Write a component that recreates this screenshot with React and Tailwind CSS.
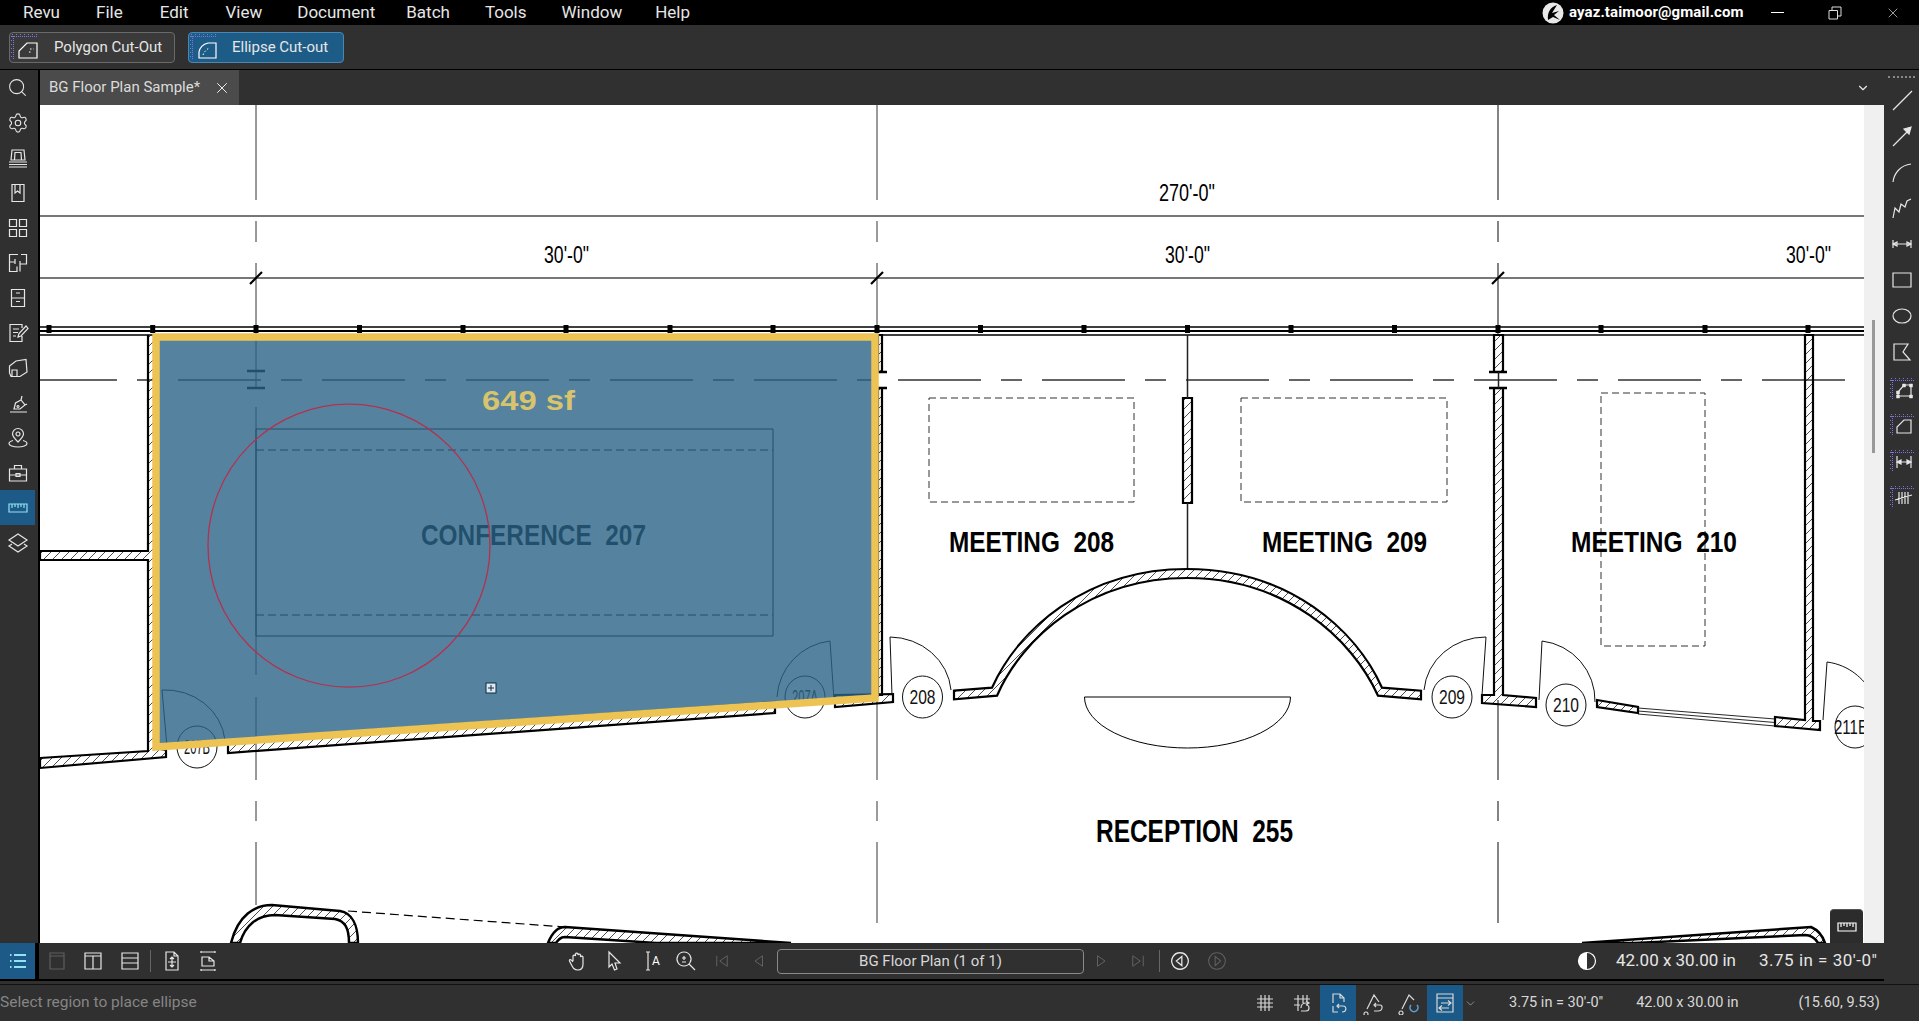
import { Search, Settings, X, ChevronDown } from 'lucide-react';

const Ic = ({ children, size = 24, className = '' }) => (
  <svg width={size} height={size} viewBox="0 0 24 24" fill="none" stroke="currentColor" strokeWidth="1.2" className={className}>
    {children}
  </svg>
);

// purple ruler ticks on the top and left of the measure tools
const Ticks = () => (
  <g stroke="#7a76e0" strokeWidth="1" strokeDasharray="1 1">
    <path d="M1 4.500H24M2.500 4V24" />
    <path d="M1 2.500H24M0.500 4V24" strokeDasharray="1 3" />
  </g>
);

const leftIcons = [
  <Search size={21} strokeWidth={1.2} />,
  <Settings size={22} strokeWidth={1.2} />,
  <Ic><path d="M5 14L6 4H18L19 14ZM8.500 14L9 6.500H15L15.500 14M3 16H21M3 18.500H21M3 21H21" /></Ic>,
  <Ic><path d="M6 3.500H18V20.500H6ZM9 3.500V12L11.500 10L14 12V3.500" /></Ic>,
  <Ic><path d="M3.500 3.500H10.500V10.500H3.500ZM13.500 3.500H20.500V10.500H13.500ZM3.500 13.500H10.500V20.500H3.500ZM13.500 13.500H20.500V20.500H13.500Z" /></Ic>,
  <Ic><path d="M12 3.500H3.500V20.500H11V15.500M3.500 11H9M9 8V13M15 3.500H20.500V13H14V10M14 13V20.500" /></Ic>,
  <Ic><path d="M5.500 3.500H18.500V20.500H5.500ZM5.500 12H18.500M10 7H14M10 15.500H14" /></Ic>,
  <Ic><path d="M16 7V3.500H4V20.500H16V15M7 8H13M7 11.500H12M7 15H10M12 16L13 12.500L20 5L22 7.500L15 15Z" /></Ic>,
  <Ic><path d="M3.500 10L10 5L20 3.500L21 16L14 20.500H5L3.500 17ZM6 20V14H11V20" /></Ic>,
  <Ic><path d="M4 21H21M8 18L9.500 12L15 9L19 14L14 18ZM15 9L16 5M19 14L21 13M12 14.500A1 1 0 1 0 12.010 14.500" /></Ic>,
  <Ic><path d="M12 16C9 13 6.500 10.500 6.500 8A5.500 5.500 0 0 1 17.500 8C17.500 10.500 15 13 12 16ZM12 6A2 2 0 1 0 12.010 6M7 14.500C4.500 15.200 3 16.200 3 17.500C3 19.500 7 21 12 21C17 21 21 19.500 21 17.500C21 16.200 19.500 15.200 17 14.500" /></Ic>,
  <Ic><path d="M3.500 8H20.500V20H3.500ZM8.500 8V4.500H15.500V8M3.500 14H20.500M10 12.500H14V15.500H10Z" /></Ic>,
];

const rightIcons = [
  <Ic><path d="M3 22L22 3" /></Ic>,
  <Ic><path d="M3 22L18 7" /><path d="M14 5L21 3L19 10Z" fill="currentColor" /></Ic>,
  <Ic><path d="M3 22C4 13 11 5 21 4" /></Ic>,
  <Ic><path d="M3 22L5 12L9 16L11 8L15 11L17 5L21 3" /></Ic>,
  <Ic><path d="M3 8V16M21 8V16M3 12H21M3 12L7 10V14ZM21 12L17 10V14Z" /></Ic>,
  <Ic><path d="M3 5H21V19H3Z" /></Ic>,
  <Ic><path d="M3 12A9 7 0 1 0 21 12A9 7 0 1 0 3 12" /></Ic>,
  <Ic><path d="M4 4H18L13 12L20 20H4Z" /></Ic>,
  <Ic><Ticks /><path d="M8 20L8 16L14 9H21V20Z" /><path d="M6.500 15H9.500V18H6.500ZM12.500 8H15.500V11H12.500ZM19.500 8H22.500V11H19.500ZM6.500 19H9.500V22H6.500ZM19.500 19H22.500V22H19.500Z" fill="currentColor" strokeWidth="0.5" /></Ic>,
  <Ic><Ticks /><path d="M7 21V15L14 8H21V21Z" /></Ic>,
  <Ic><Ticks /><path d="M7 8V20M21 8V20M7 14H21" /><path d="M7 14L11 12V16ZM21 14L17 12V16Z" fill="currentColor" /></Ic>,
  <Ic><Ticks /><path d="M9 8V20M12 8V20M15 8V20M18 8V20M5 16L22 11" /></Ic>,
];

const Ruler = ({ className = '' }) => (
  <Ic className={className}><path d="M3 8H21V16H3ZM6 8V12M9 8V11M12 8V12M15 8V11M18 8V12" /></Ic>
);

const CutIcon = ({ ellipse }) => (
  <svg width="30" height="30" viewBox="0 0 30 30" fill="none" className="text-white">
    <g stroke="#7a76e0" strokeDasharray="1 1">
      <path d="M2 4.500H28M3.500 4V28" />
      <path d="M2 2.500H28M1.500 4V28" strokeDasharray="1 3" />
    </g>
    {ellipse ? (
      <>
        <path d="M10 26V20C11 15 15 12 19 11H27V26Z" stroke="#fff" strokeWidth="1.200" />
        <path d="M14 23C15 20 17 18 20 16" stroke="#fff" strokeDasharray="1.500 2" />
      </>
    ) : (
      <>
        <path d="M9 26V19L17 11H27V26Z" stroke="#fff" strokeWidth="1.200" />
        <path d="M20 17H24M19 20H21" stroke="#fff" strokeDasharray="1.500 2" />
      </>
    )}
  </svg>
);

const Wall = ({ d }) => <path d={d} fill="url(#hatch)" stroke="#000" strokeWidth="2.200" />;

const Tag = ({ x, y, r = 21, t }) => (
  <g>
    <ellipse cx={x} cy={y} rx={r - 1} ry={r} fill="#fff" stroke="#111" strokeWidth="1" />
    <text x={x - 13} y={y + 7} fontSize="20" textLength="26" lengthAdjust="spacingAndGlyphs" fill="#111">{t}</text>
  </g>
);

const Label = ({ x, y, w, size, t, bold = true, fill = '#000' }) => (
  <text x={x} y={y} fontSize={size} fontWeight={bold ? 700 : 400} textLength={w} lengthAdjust="spacingAndGlyphs" fill={fill}>{t}</text>
);

const posts = [49, 152.7, 256, 359.500, 463, 566, 670, 773, 877, 980.500, 1084, 1187.500, 1291, 1394.500, 1498, 1601, 1705, 1808];

const Plan = () => (
  <svg viewBox="40 105 1824 838" className="block w-[1824px] h-[838px] bg-white font-['Liberation_Sans',sans-serif]">
    <defs>
      <pattern id="hatch" width="9" height="9" patternUnits="userSpaceOnUse">
        <path d="M-1 10L10 -1" stroke="#222" strokeWidth="0.8" />
      </pattern>
    </defs>

    {/* dimension lines */}
    <path d="M40 216H1864M40 278H1864" stroke="#777" strokeWidth="2" />
    <path d="M256 105V200M256 221V242M256 263V388M256 407V675M256 697V780M256 801V821M256 842V905" stroke="#333" strokeWidth="1" fill="none" />
    <path d="M877 105V200M877 221V242M877 263V335M877 700V780M877 801V821M877 842V923" stroke="#666" strokeWidth="1.300" fill="none" />
    <path d="M1498 105V200M1498 221V242M1498 263V335M1498 700V780M1498 801V821M1498 842V923" stroke="#777" strokeWidth="1.800" fill="none" />
    <path d="M250 284L262 272M871 284L883 272M1492 284L1504 272" stroke="#000" strokeWidth="2.200" />
    <Label x={1159} y={201} w={56} size={23} t={`270'-0"`} bold={false} />
    <Label x={544} y={263} w={45} size={23} t={`30'-0"`} bold={false} />
    <Label x={1165} y={263} w={45} size={23} t={`30'-0"`} bold={false} />
    <Label x={1786} y={263} w={45} size={23} t={`30'-0"`} bold={false} />

    {/* grid line */}
    <path d="M34 380H1852" stroke="#333" strokeWidth="1.300" strokeDasharray="83 20 21 20" />

    {/* curtain wall */}
    <path d="M40 327H1864M40 335H1864" stroke="#000" strokeWidth="1.300" />
    <path d="M40 331H1864" stroke="#000" strokeWidth="2" />
    {posts.map((x) => (
      <rect key={x} x={x - 2.500} y={325} width={5} height={8} fill="#000" />
    ))}

    {/* column marks */}
    <path d="M247 371H265M247 388H265" stroke="#000" strokeWidth="2.500" />
    <path d="M877 372H887M877 388H887M1489 372H1507M1489 388H1507" stroke="#000" strokeWidth="2.500" />

    {/* walls */}
    <Wall d="M148 335V551H40V560H148V751L40 758V768L166 757V750L155 748V335" />
    <Wall d="M228 740V753L775 713V702Z" />
    <Wall d="M835 695V707L893 702V694Z" />
    <Wall d="M878 335H882V372H878ZM878 388H882V695H878Z" />
    <Wall d="M1183 398H1192V503H1183Z" />
    <path d="M1187.500 335V398M1187.500 503V569" stroke="#222" strokeWidth="1.500" />
    <Wall d="M954 690.700L992 687.700C1018 630 1085 569 1187 569C1289 569 1356 630 1382 687.700L1421 690.700V699.300L1378 695.700C1352 638 1285 578 1187 578C1089 578 1022 638 997 695.700L954 699.300Z" />
    <Wall d="M1494 335H1503V372H1494ZM1494 388H1503V695L1536 698V707L1482 703V695H1494Z" />
    <path d="M1498.500 372V388" stroke="#222" strokeWidth="1.500" />
    <Wall d="M1597 700L1638 707V713L1597 707Z" />
    <path d="M1638 708L1775 719M1638 711L1775 722.500M1638 714L1775 726" stroke="#111" strokeWidth="0.900" />
    <Wall d="M1805 335H1813V721L1820 721V730L1775 726V717L1805 720Z" />

    {/* furniture */}
    <g fill="none" stroke="#333" strokeWidth="1" strokeDasharray="7 4">
      <path d="M929 398H1134V502H929Z" />
      <path d="M1241 398H1447V502H1241Z" />
      <path d="M1601 393H1705V646H1601Z" />
    </g>
    <path d="M256 429H773V636H256Z" fill="none" stroke="#000" strokeWidth="1" />
    <path d="M256 450H773M256 615H773" stroke="#000" strokeWidth="1" strokeDasharray="8 4" />
    <path d="M1084.500 697H1290.500A103 51 0 0 1 1084.500 697Z" fill="#fff" stroke="#000" strokeWidth="1" />

    {/* doors */}
    <g fill="none" stroke="#111" strokeWidth="1">
      <path d="M890 637L892 695M890 637A62 58 0 0 1 951 690" />
      <path d="M1486 637L1482 695M1486 637A62 58 0 0 0 1424 690" />
      <path d="M1542 641L1539 700M1542 641A60 60 0 0 1 1595 702" />
      <path d="M1827 662L1823 720M1827 662C1850 665 1864 680 1870 690" />
      <path d="M830 641L834 700M830 641A60 60 0 0 0 777 697" />
      <path d="M162 690L167 747M162 690A60 56 0 0 1 225 740" />
    </g>
    <Tag x={922.500} y={697} t="208" />
    <Tag x={1452} y={697} t="209" />
    <Tag x={1566} y={705} t="210" />
    <g>
      <ellipse cx={1855} cy={727} rx={20} ry={21} fill="#fff" stroke="#111" strokeWidth="1" />
      <text x={1834} y={734} fontSize="20" textLength="34" lengthAdjust="spacingAndGlyphs" fill="#111">211E</text>
    </g>
    <Tag x={805} y={697} t="207A" />
    <Tag x={197} y={747} t="207B" />

    {/* room names */}
    <Label x={421} y={545} w={225} size={30} t={'CONFERENCE\u00a0\u00a0207'} />
    <Label x={949} y={552} w={165} size={30} t={'MEETING\u00a0\u00a0208'} />
    <Label x={1262} y={552} w={165} size={30} t={'MEETING\u00a0\u00a0209'} />
    <Label x={1571} y={552} w={166} size={30} t={'MEETING\u00a0\u00a0210'} />
    <Label x={1096} y={842} w={197} size={32} t={'RECEPTION\u00a0\u00a0255'} />

    {/* lower wing */}
    <path d="M231 943C238 915 255 905 272 905L340 911C352 913 358 925 358 943H349C349 928 345 921 335 919L275 915C258 915 245 925 240 943Z" fill="url(#hatch)" stroke="#000" strokeWidth="2.500" />
    <path d="M348 911L565 927" stroke="#000" strokeWidth="1.200" strokeDasharray="9 5" />
    <path d="M548 943C552 933 557 927 565 927L791 943H656L565 937C560 937 558 940 556 943Z" fill="url(#hatch)" stroke="#000" strokeWidth="2.500" />
    <path d="M1582 943L1811 927C1818 930 1823 937 1825 943H1818C1815 938 1811 935 1805 935L1635 943Z" fill="url(#hatch)" stroke="#000" strokeWidth="2.500" />

    {/* area measurement */}
    <path d="M156 337H875V698L156 747Z" fill="#2b6487" fillOpacity="0.8" stroke="#edc453" strokeWidth="7.500" strokeLinejoin="miter" />
    <ellipse cx={349} cy={545.700} rx={141} ry={141.500} fill="none" stroke="#b5304f" strokeWidth="1.300" />
    <Label x={482} y={410} w={93} size={28} t="649 sf" fill="#d8c46c" />
    <rect x={486} y={683} width={10} height={10} fill="#dfe8ee" stroke="#0c2c44" strokeWidth="1" />
    <path d="M491 685V691M488 688H494" stroke="#0c2c44" strokeWidth="1" />
  </svg>
);

const App = () => {
  const menus = [
    ['Revu', 'ml-[23px]'],
    ['File', 'ml-[36px]'],
    ['Edit', 'ml-[37px]'],
    ['View', 'ml-[37px]'],
    ['Document', 'ml-[35px]'],
    ['Batch', 'ml-[31px]'],
    ['Tools', 'ml-[35px]'],
    ['Window', 'ml-[35px]'],
    ['Help', 'ml-[33px]'],
  ];

  return (
    <div className="w-[1919px] h-[1021px] flex flex-col overflow-hidden bg-[#303030] text-[#e6e6e6] font-['Roboto',sans-serif]">
      {/* menu bar */}
      <div className="h-[25px] shrink-0 bg-black flex items-center text-[17px]">
        {menus.map(([m, c]) => (
          <span key={m} className={c}>{m}</span>
        ))}
        <svg width="22" height="22" viewBox="0 0 22 22" className="ml-auto">
          <circle cx="11" cy="11" r="10.500" fill="#e8e8e8" />
          <path d="M6 18C5 11 8 5 15 3L10 11L17 9L12 13L18 18L11 15Z" fill="#000" />
        </svg>
        <span className="ml-[5px] text-[15px] font-bold text-white w-[176px] tracking-[0.1px]">ayaz.taimoor@gmail.com</span>
        <span className="ml-[26px] w-[13px] h-px bg-white" />
        <svg width="14" height="14" viewBox="0 0 14 14" fill="none" stroke="#ddd" className="ml-[44px]">
          <path d="M1 4.500H9.500V13H1ZM4 4V1H13V10H10" />
        </svg>
        <X size={16} strokeWidth={1} className="ml-[43px] mr-[18px]" />
      </div>

      {/* tool options */}
      <div className="h-[45px] shrink-0 flex items-center border-b border-black">
        <button className="ml-[9px] w-[166px] h-[31px] flex items-center rounded border border-[#6a6a6a] bg-[#3a3a3a] text-[15px]">
          <CutIcon />
          <span className="ml-[14px]">Polygon Cut-Out</span>
        </button>
        <button className="ml-[13px] w-[156px] h-[31px] flex items-center rounded border border-[#4a86b4] bg-[#1e5c88] text-[15px]">
          <CutIcon ellipse />
          <span className="ml-[13px]">Ellipse Cut-out</span>
        </button>
      </div>

      {/* workspace */}
      <div className="h-[914px] shrink-0 flex">
        <div className="w-[1884px] flex flex-col">
          <div className="h-[873px] flex">
            <div className="w-[40px] flex flex-col border-r-2 border-black">
              {leftIcons.map((icon, i) => (
                <div key={i} className="w-[35px] h-[35px] flex items-center justify-center">{icon}</div>
              ))}
              <div className="w-[35px] h-[35px] flex items-center justify-center bg-[#1d5a87] text-[#8fe3f2]">
                <Ruler />
              </div>
              <div className="w-[35px] h-[35px] flex items-center justify-center">
                <Ic><path d="M12 3L21 9L12 15L3 9ZM6 13L3 15L12 21L21 15L18 13" /></Ic>
              </div>
            </div>
            <div className="w-[1844px] flex flex-col">
              <div className="h-[35px] flex items-center">
                <div className="w-[199px] h-full flex items-center bg-[#4b4b4b] text-[15px] text-[#dcdcdc]">
                  <span className="ml-[9px]">BG Floor Plan Sample*</span>
                  <X size={18} strokeWidth={1.200} className="ml-auto mr-[8px] text-white" />
                </div>
                <ChevronDown size={14} className="ml-auto mr-[14px]" />
              </div>
              <div className="relative h-[838px] flex">
                <Plan />
                <div className="w-[20px] bg-[#f0f0f0]">
                  <div className="ml-[8px] mt-[215px] w-[3px] h-[133px] bg-[#999]" />
                </div>
                <div className="absolute right-[21px] bottom-0 w-[33px] h-[34px] rounded-t bg-[#2c2c2c] border-t border-[#555] flex items-center justify-center text-white">
                  <Ruler />
                </div>
              </div>
            </div>
          </div>

          {/* page navigation */}
          <div className="h-[36px] shrink-0 flex items-center border-b-0">
            <div className="w-[35px] h-full bg-[#1d5a87] flex items-center justify-center text-[#8fe3f2]">
              <svg width="20" height="20" viewBox="0 0 20 20" fill="none" stroke="currentColor" strokeWidth="2">
                <path d="M6 4H18M6 10H18M6 16H18M2 4H3.500M2 10H3.500M2 16H3.500" />
              </svg>
            </div>
            <div className="w-[4px] h-full bg-black mr-0" />
            <div className="w-[36px] flex justify-center text-[#5e5e5e]"><Ic><path d="M5 4H19V20H5ZM5 7H19" /></Ic></div>
            <div className="w-[36px] flex justify-center"><Ic><path d="M4 4H20V20H4ZM4 7H20M12 7V20" /></Ic></div>
            <div className="w-[37px] flex justify-center"><Ic><path d="M4 4H20V20H4ZM4 9H20M4 14H20" /></Ic></div>
            <div className="ml-[2px] w-px h-[22px] bg-[#666]" />
            <div className="ml-[3px] w-[36px] flex justify-center"><Ic><path d="M6 3H14L18 7V21H6ZM14 3V7H18M12 8V18M8 13H16M10 10L12 8L14 10M10 16L12 18L14 16" /></Ic></div>
            <div className="w-[36px] flex justify-center"><Ic><path d="M5 3H19M5 2V4M19 2V4M6 8H13L18 12V17H6ZM13 8V12H18M5 21H19M5 20V22M19 20V22" /></Ic></div>
            <div className="ml-[334px] w-[36px] flex justify-center"><Ic><path d="M7 12V7A1.300 1.300 0 0 1 9.500 7V5A1.300 1.300 0 0 1 12 5V6A1.300 1.300 0 0 1 14.500 6V8A1.300 1.300 0 0 1 17 8V15C17 19 15 21 12 21C8 21 7 19 5 15L3.500 12C3 10 5 10 7 13" /></Ic></div>
            <div className="w-[36px] flex justify-center"><Ic><path d="M7 3L18 14H13L15 20L12.500 21L10 15L7 18Z" /></Ic></div>
            <div className="w-[36px] flex justify-center items-center">
              <Ic><path d="M6 3H10M8 3V21M6 21H10" /></Ic>
              <span className="ml-[-12px] text-[12px] text-white">A</span>
            </div>
            <div className="w-[36px] flex justify-center"><Ic><path d="M10 3A7 7 0 1 0 10.010 3M15 15L21 21M8 9H12M10 7V11M8 13H12" /></Ic></div>
            <div className="w-[36px] flex justify-center text-[#666]"><Ic className="scale-75"><path d="M5 5V19M19 5L9 12L19 19Z" /></Ic></div>
            <div className="w-[36px] flex justify-center text-[#666]"><Ic className="scale-75"><path d="M18 5L8 12L18 19Z" /></Ic></div>
            <div className="ml-[1px] w-[307px] h-[25px] rounded-sm border border-[#8a8a8a] flex items-center justify-center text-[15px] text-[#d8d8d8]">BG Floor Plan (1 of 1)</div>
            <div className="w-[36px] flex justify-center text-[#666]"><Ic className="scale-75"><path d="M6 5L16 12L6 19Z" /></Ic></div>
            <div className="w-[36px] flex justify-center text-[#666]"><Ic className="scale-75"><path d="M19 5V19M5 5L15 12L5 19Z" /></Ic></div>
            <div className="ml-[3px] w-px h-[22px] bg-[#666]" />
            <div className="ml-[2px] w-[36px] flex justify-center"><Ic size={22}><path d="M12 3A9 9 0 1 0 12.010 3M14 7L8 12L14 17Z" strokeWidth="1.400" /></Ic></div>
            <div className="ml-[1px] w-[36px] flex justify-center text-[#5e5e5e]"><Ic size={22}><path d="M12 3A9 9 0 1 0 12.010 3M10 7L16 12L10 17Z" /></Ic></div>
            <div className="ml-[334px] w-[36px] flex justify-center">
              <svg width="20" height="20" viewBox="0 0 20 20">
                <circle cx="10" cy="10" r="8.500" fill="none" stroke="#fff" strokeWidth="1.200" />
                <path d="M10 1.500A8.500 8.500 0 0 0 10 18.500Z" fill="#fff" />
              </svg>
            </div>
            <span className="ml-[11px] text-[17px] whitespace-nowrap">42.00 x 30.00 in</span>
            <span className="ml-[23px] text-[17px] tracking-[0.5px] whitespace-nowrap">3.75 in = 30'-0"</span>
          </div>
          <div className="h-[2px] shrink-0 bg-black" />
          <div className="h-[3px] shrink-0" />
        </div>

        {/* markup tools */}
        <div className="w-[35px] flex flex-col items-center">
          <div className="h-[12px] w-[27px] mt-[6px] mb-[-6px] border-t-2 border-dotted border-[#888]" />
          {rightIcons.map((icon, i) => (
            <div key={i} className="h-[36px] flex items-center justify-center">{icon}</div>
          ))}
        </div>
      </div>

      {/* status bar */}
      <div className="h-[37px] shrink-0 flex items-center border-t border-[#111] text-[#d8d8d8]">
        <span className="text-[15.500px] text-[#858585] w-[1246px]">Select region to place ellipse</span>
        <div className="w-[37px] flex justify-center"><Ic><path d="M4 8H20M4 16H20M8 4V20M16 4V20M4 12H20M12 4V20" /></Ic></div>
        <div className="w-[37px] flex justify-center"><Ic><path d="M4 8H20M4 14H10M8 4V20M13 4V12M17 4V10M11 17C11 14 13 12 16 12H19M16 10L19 12L16 14M11 20H16C20 20 20 14 16 14" /></Ic></div>
        <div className="w-[36px] h-full bg-[#1b5a88] flex items-center justify-center"><Ic><path d="M7 12V3H14L18 7V11M14 3V7H18M7 15V21H12M11 15H17C21 15 21 21 16 21M13 13L11 15L13 17" /></Ic></div>
        <div className="w-[35px] flex justify-center"><Ic><path d="M5 18L12 4L17 11M4 21A2 2 0 1 0 4.010 21M12 14H18C21 14 21 20 16 20H12M14 12L12 14L14 16" /></Ic></div>
        <div className="w-[36px] flex justify-center"><Ic><path d="M5 18L12 4L17 9M4 20A2 2 0 1 0 4.010 20" /><path d="M14 14A4 4 0 1 0 20 14" stroke="#5aa0d8" strokeWidth="1.600" /></Ic></div>
        <div className="w-[36px] h-full bg-[#1b5a88] flex items-center justify-center"><Ic><path d="M4 3H20V21H4ZM4 7H20M8 12H18M15 9.500L18 12L15 14.500M16 17H6M9 14.500L6 17L9 19.500" /></Ic></div>
        <ChevronDown size={13} strokeWidth={1} className="ml-[1px] w-[13px]" />
        <span className="ml-[32px] text-[14.500px] whitespace-nowrap">3.75 in = 30'-0"</span>
        <span className="ml-[33px] text-[14.500px] whitespace-nowrap">42.00 x 30.00 in</span>
        <span className="ml-[60px] text-[14.500px] whitespace-nowrap">(15.60, 9.53)</span>
      </div>
    </div>
  );
};

export default App;
